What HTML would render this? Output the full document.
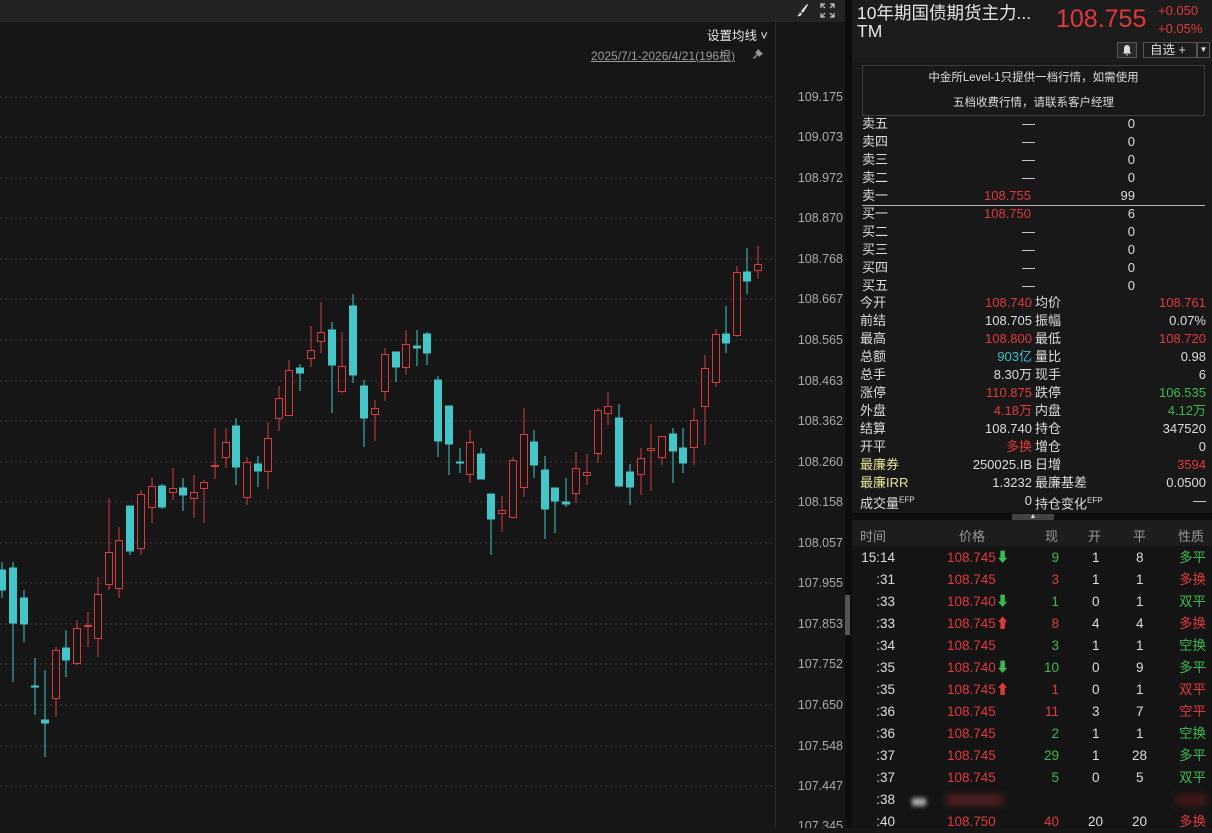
<!DOCTYPE html>
<html><head><meta charset="utf-8"><style>
*{margin:0;padding:0;box-sizing:border-box}
body{width:1212px;height:828px;background:#161616;overflow:hidden;position:relative;font-family:"Liberation Sans","Noto Sans CJK SC",sans-serif;color:#ddd}
.a{position:absolute;white-space:nowrap}
.r{color:#e0393c}.g{color:#3dba4e}.c{color:#3fc3c6}.y{color:#e8e39a}.w{color:#e6e6e6}
.ob{font-size:13px;line-height:18px}
.tr{font-size:13.5px}
</style></head><body>
<div class="a" style="left:0;top:0;width:845px;height:22px;background:#232323"></div>
<svg class="a" style="left:795px;top:3px" width="14" height="14" viewBox="0 0 14 14"><path d="M12 1 L6 8 L8 10 L13 2 Z" fill="#ddd"/><path d="M5 9 L7 11 Q5 14 2 13 Q4 12 5 9Z" fill="#ddd"/></svg>
<svg class="a" style="left:820px;top:3px" width="15" height="15" viewBox="0 0 15 15" fill="none" stroke="#ccc" stroke-width="1.2"><path d="M1 5V1H5M10 1H14V5M14 10V14H10M5 14H1V10M1 1L5 5M14 1L10 5M14 14L10 10M1 14L5 10"/></svg>
<div class="a w" style="left:707px;top:25px;font-size:12.5px">设置均线 ˅</div>
<div class="a" style="left:591px;top:47px;font-size:12px;color:#999;text-decoration:underline">2025/7/1-2026/4/21(196根)</div>
<svg class="a" style="left:752px;top:48px" width="12" height="12" viewBox="0 0 12 12"><path d="M6 1 L11 6 L9 7 L7 9 L6 7 L2 11 L1 10 L5 6 L3 5 L5 3 Z" fill="#999"/></svg>
<div class="a" style="left:775px;top:22px;width:1px;height:806px;background:#2c2c2c"></div>
<div class="a" style="left:845px;top:0;width:7px;height:828px;background:#0c0c0c"></div>
<div class="a" style="left:845px;top:595px;width:5px;height:40px;background:#555"></div>
<svg class="a" style="left:0;top:0" width="845" height="828">
<g stroke="#3a3a3a" stroke-dasharray="2 3" stroke-width="1">
<line x1="0" x2="775" y1="97" y2="97"/><line x1="0" x2="775" y1="137" y2="137"/><line x1="0" x2="775" y1="178" y2="178"/><line x1="0" x2="775" y1="218" y2="218"/><line x1="0" x2="775" y1="259" y2="259"/><line x1="0" x2="775" y1="299" y2="299"/><line x1="0" x2="775" y1="340" y2="340"/><line x1="0" x2="775" y1="381" y2="381"/><line x1="0" x2="775" y1="421" y2="421"/><line x1="0" x2="775" y1="462" y2="462"/><line x1="0" x2="775" y1="502" y2="502"/><line x1="0" x2="775" y1="543" y2="543"/><line x1="0" x2="775" y1="583" y2="583"/><line x1="0" x2="775" y1="624" y2="624"/><line x1="0" x2="775" y1="664" y2="664"/><line x1="0" x2="775" y1="705" y2="705"/><line x1="0" x2="775" y1="746" y2="746"/><line x1="0" x2="775" y1="786" y2="786"/>
</g>
<g fill="#aaa" font-size="12.5" text-anchor="end" font-family="Liberation Sans">
<text x="843" y="101">109.175</text><text x="843" y="141">109.073</text><text x="843" y="182">108.972</text><text x="843" y="222">108.870</text><text x="843" y="263">108.768</text><text x="843" y="303">108.667</text><text x="843" y="344">108.565</text><text x="843" y="385">108.463</text><text x="843" y="425">108.362</text><text x="843" y="466">108.260</text><text x="843" y="506">108.158</text><text x="843" y="547">108.057</text><text x="843" y="587">107.955</text><text x="843" y="628">107.853</text><text x="843" y="668">107.752</text><text x="843" y="709">107.650</text><text x="843" y="750">107.548</text><text x="843" y="790">107.447</text><text x="843" y="830">107.345</text>
</g>
<g stroke="#44c5c8" fill="#44c5c8" stroke-width="1">
<line x1="2" x2="2" y1="562" y2="598"/><rect x="-1.5" y="570" width="7" height="20"/>
<line x1="13" x2="13" y1="562" y2="682"/><rect x="9.5" y="568" width="7" height="55"/>
<line x1="24" x2="24" y1="590" y2="642"/><rect x="20.5" y="598" width="7" height="26"/>
<line x1="35" x2="35" y1="658" y2="715"/><rect x="31.5" y="686" width="7" height="1"/>
<line x1="45" x2="45" y1="670" y2="757"/><rect x="41.5" y="720" width="7" height="3"/>
<line x1="66" x2="66" y1="630" y2="677"/><rect x="62.5" y="648" width="7" height="12"/>
<line x1="130" x2="130" y1="506" y2="555"/><rect x="126.5" y="506" width="7" height="45"/>
<line x1="162" x2="162" y1="484" y2="509"/><rect x="158.5" y="486" width="7" height="21"/>
<line x1="183" x2="183" y1="478" y2="511"/><rect x="179.5" y="488" width="7" height="7"/>
<line x1="236" x2="236" y1="418" y2="485"/><rect x="232.5" y="426" width="7" height="41"/>
<line x1="258" x2="258" y1="456" y2="487"/><rect x="254.5" y="464" width="7" height="7"/>
<line x1="300" x2="300" y1="364" y2="391"/><rect x="296.5" y="368" width="7" height="5"/>
<line x1="332" x2="332" y1="322" y2="413"/><rect x="328.5" y="330" width="7" height="35"/>
<line x1="353" x2="353" y1="294" y2="383"/><rect x="349.5" y="306" width="7" height="69"/>
<line x1="364" x2="364" y1="380" y2="447"/><rect x="360.5" y="386" width="7" height="32"/>
<line x1="396" x2="396" y1="352" y2="382"/><rect x="392.5" y="352" width="7" height="15"/>
<line x1="417" x2="417" y1="330" y2="366"/><rect x="413.5" y="346" width="7" height="2"/>
<line x1="427" x2="427" y1="332" y2="365"/><rect x="423.5" y="334" width="7" height="19"/>
<line x1="438" x2="438" y1="376" y2="457"/><rect x="434.5" y="380" width="7" height="61"/>
<line x1="449" x2="449" y1="406" y2="475"/><rect x="445.5" y="406" width="7" height="38"/>
<line x1="460" x2="460" y1="448" y2="473"/><rect x="456.5" y="462" width="7" height="1"/>
<line x1="481" x2="481" y1="448" y2="479"/><rect x="477.5" y="454" width="7" height="25"/>
<line x1="491" x2="491" y1="494" y2="555"/><rect x="487.5" y="494" width="7" height="25"/>
<line x1="534" x2="534" y1="430" y2="478"/><rect x="530.5" y="442" width="7" height="23"/>
<line x1="545" x2="545" y1="456" y2="539"/><rect x="541.5" y="470" width="7" height="39"/>
<line x1="555" x2="555" y1="488" y2="533"/><rect x="551.5" y="488" width="7" height="13"/>
<line x1="566" x2="566" y1="478" y2="507"/><rect x="562.5" y="502" width="7" height="2"/>
<line x1="619" x2="619" y1="404" y2="487"/><rect x="615.5" y="418" width="7" height="68"/>
<line x1="630" x2="630" y1="464" y2="505"/><rect x="626.5" y="472" width="7" height="15"/>
<line x1="673" x2="673" y1="428" y2="483"/><rect x="669.5" y="434" width="7" height="17"/>
<line x1="683" x2="683" y1="428" y2="473"/><rect x="679.5" y="448" width="7" height="15"/>
<line x1="726" x2="726" y1="306" y2="353"/><rect x="722.5" y="334" width="7" height="9"/>
<line x1="747" x2="747" y1="248" y2="294"/><rect x="743.5" y="272" width="7" height="9"/>
</g>
<g stroke="#d83b3e" fill="#161616" stroke-width="1">
<line x1="56" x2="56" y1="647" y2="717"/><rect x="52.5" y="650.5" width="7" height="48"/>
<line x1="77" x2="77" y1="620" y2="665"/><rect x="73.5" y="628.5" width="7" height="35"/>
<line x1="88" x2="88" y1="612" y2="647"/><rect x="84.5" y="625.5" width="7" height="1"/>
<line x1="98" x2="98" y1="577" y2="657"/><rect x="94.5" y="594.5" width="7" height="44"/>
<line x1="109" x2="109" y1="498" y2="590"/><rect x="105.5" y="552.5" width="7" height="32"/>
<line x1="119" x2="119" y1="527" y2="598"/><rect x="115.5" y="540.5" width="7" height="48"/>
<line x1="141" x2="141" y1="490" y2="555"/><rect x="137.5" y="494.5" width="7" height="54"/>
<line x1="152" x2="152" y1="478" y2="523"/><rect x="148.5" y="486.5" width="7" height="21"/>
<line x1="173" x2="173" y1="468" y2="500"/><rect x="169.5" y="488.5" width="7" height="4"/>
<line x1="194" x2="194" y1="475" y2="518"/><rect x="190.5" y="492.5" width="7" height="6"/>
<line x1="204" x2="204" y1="480" y2="523"/><rect x="200.5" y="482.5" width="7" height="6"/>
<line x1="215" x2="215" y1="428" y2="479"/><rect x="211.5" y="465.5" width="7" height="1"/>
<line x1="226" x2="226" y1="428" y2="468"/><rect x="222.5" y="442.5" width="7" height="15"/>
<line x1="247" x2="247" y1="457" y2="505"/><rect x="243.5" y="462.5" width="7" height="35"/>
<line x1="268" x2="268" y1="422" y2="489"/><rect x="264.5" y="438.5" width="7" height="33"/>
<line x1="279" x2="279" y1="386" y2="431"/><rect x="275.5" y="398.5" width="7" height="20"/>
<line x1="289" x2="289" y1="360" y2="415"/><rect x="285.5" y="370.5" width="7" height="45"/>
<line x1="311" x2="311" y1="326" y2="367"/><rect x="307.5" y="350.5" width="7" height="8"/>
<line x1="321" x2="321" y1="302" y2="353"/><rect x="317.5" y="332.5" width="7" height="9"/>
<line x1="342" x2="342" y1="332" y2="393"/><rect x="338.5" y="366.5" width="7" height="25"/>
<line x1="375" x2="375" y1="400" y2="441"/><rect x="371.5" y="408.5" width="7" height="6"/>
<line x1="385" x2="385" y1="348" y2="401"/><rect x="381.5" y="354.5" width="7" height="37"/>
<line x1="406" x2="406" y1="330" y2="375"/><rect x="402.5" y="344.5" width="7" height="23"/>
<line x1="470" x2="470" y1="430" y2="483"/><rect x="466.5" y="442.5" width="7" height="32"/>
<line x1="502" x2="502" y1="496" y2="532"/><rect x="498.5" y="510.5" width="7" height="3"/>
<line x1="513" x2="513" y1="457" y2="518"/><rect x="509.5" y="460.5" width="7" height="57"/>
<line x1="524" x2="524" y1="408" y2="497"/><rect x="520.5" y="434.5" width="7" height="53"/>
<line x1="576" x2="576" y1="452" y2="503"/><rect x="572.5" y="468.5" width="7" height="25"/>
<line x1="587" x2="587" y1="454" y2="485"/><rect x="583.5" y="472.5" width="7" height="3"/>
<line x1="598" x2="598" y1="408" y2="463"/><rect x="594.5" y="410.5" width="7" height="43"/>
<line x1="608" x2="608" y1="392" y2="425"/><rect x="604.5" y="406.5" width="7" height="7"/>
<line x1="641" x2="641" y1="448" y2="495"/><rect x="637.5" y="458.5" width="7" height="16"/>
<line x1="651" x2="651" y1="424" y2="491"/><rect x="647.5" y="448.5" width="7" height="2"/>
<line x1="662" x2="662" y1="436" y2="465"/><rect x="658.5" y="436.5" width="7" height="21"/>
<line x1="694" x2="694" y1="408" y2="465"/><rect x="690.5" y="420.5" width="7" height="27"/>
<line x1="705" x2="705" y1="355" y2="445"/><rect x="701.5" y="368.5" width="7" height="38"/>
<line x1="716" x2="716" y1="329" y2="387"/><rect x="712.5" y="334.5" width="7" height="48"/>
<line x1="737" x2="737" y1="266" y2="337"/><rect x="733.5" y="272.5" width="7" height="63"/>
<line x1="758" x2="758" y1="246" y2="279"/><rect x="754.5" y="264.5" width="7" height="6"/>
</g>
</svg>

<div class="a" style="left:852px;top:0;width:360px;height:62px;background:#1c1c1c"></div>
<div class="a" style="left:852px;top:62px;width:360px;height:453px;background:#181818"></div>
<div class="a w" style="left:857px;top:0px;font-size:17.5px">10年期国债期货主力...</div>
<div class="a w" style="left:857px;top:21px;font-size:17.5px">TM</div>
<div class="a r" style="left:1056px;top:5px;font-size:25px">108.755</div>
<div class="a r" style="left:1158px;top:3px;font-size:13px">+0.050</div>
<div class="a r" style="left:1158px;top:21px;font-size:13px">+0.05%</div>
<div class="a" style="left:1117px;top:42px;width:20px;height:16px;background:#2a2a2a;border:1px solid #555"></div>
<svg class="a" style="left:1121px;top:44px" width="12" height="12" viewBox="0 0 12 12"><path d="M6 1 Q9 1 9 5 V8 L10.5 9.5 H1.5 L3 8 V5 Q3 1 6 1Z M5 10.2 H7 Q6.8 11.5 6 11.5 Q5.2 11.5 5 10.2Z" fill="#ddd"/></svg>
<div class="a" style="left:1143px;top:42px;width:54px;height:16px;border:1px solid #555;font-size:12.5px;line-height:14px;padding-left:6px;color:#ddd">自选 +</div>
<div class="a" style="left:1197px;top:42px;width:13px;height:16px;border:1px solid #555;font-size:8px;line-height:14px;text-align:center;color:#ddd">▼</div>
<div class="a" style="left:862px;top:65px;width:343px;height:51px;border:1px solid #3d3d3d;font-size:11.5px;line-height:25px;text-align:center;color:#ddd">中金所Level-1只提供一档行情，如需使用<br>五档收费行情，请联系客户经理</div>

<div class="a ob" style="left:862px;top:115px;width:343px">
<div style="position:relative;height:18px"><span>卖五</span><span class="a" style="left:160px">—</span><span class="a" style="right:70px">0</span></div>
<div style="position:relative;height:18px"><span>卖四</span><span class="a" style="left:160px">—</span><span class="a" style="right:70px">0</span></div>
<div style="position:relative;height:18px"><span>卖三</span><span class="a" style="left:160px">—</span><span class="a" style="right:70px">0</span></div>
<div style="position:relative;height:18px"><span>卖二</span><span class="a" style="left:160px">—</span><span class="a" style="right:70px">0</span></div>
<div style="position:relative;height:18px"><span>卖一</span><span class="a r" style="right:174px">108.755</span><span class="a" style="right:70px">99</span></div>
<div style="position:relative;height:18px"><span>买一</span><span class="a r" style="right:174px">108.750</span><span class="a" style="right:70px">6</span></div>
<div style="position:relative;height:18px"><span>买二</span><span class="a" style="left:160px">—</span><span class="a" style="right:70px">0</span></div>
<div style="position:relative;height:18px"><span>买三</span><span class="a" style="left:160px">—</span><span class="a" style="right:70px">0</span></div>
<div style="position:relative;height:18px"><span>买四</span><span class="a" style="left:160px">—</span><span class="a" style="right:70px">0</span></div>
<div style="position:relative;height:18px"><span>买五</span><span class="a" style="left:160px">—</span><span class="a" style="right:70px">0</span></div>
</div>
<div class="a" style="left:862px;top:205px;width:343px;height:1px;background:#bbb"></div>

<div class="a ob" style="left:860px;top:294px;width:346px">
<div style="position:relative;height:18px"><span>今开</span><span class="a r" style="right:174px">108.740</span><span class="a" style="left:175px">均价</span><span class="a r" style="right:0">108.761</span></div>
<div style="position:relative;height:18px"><span>前结</span><span class="a" style="right:174px">108.705</span><span class="a" style="left:175px">振幅</span><span class="a" style="right:0">0.07%</span></div>
<div style="position:relative;height:18px"><span>最高</span><span class="a r" style="right:174px">108.800</span><span class="a" style="left:175px">最低</span><span class="a r" style="right:0">108.720</span></div>
<div style="position:relative;height:18px"><span>总额</span><span class="a c" style="right:174px">903亿</span><span class="a" style="left:175px">量比</span><span class="a" style="right:0">0.98</span></div>
<div style="position:relative;height:18px"><span>总手</span><span class="a" style="right:174px">8.30万</span><span class="a" style="left:175px">现手</span><span class="a" style="right:0">6</span></div>
<div style="position:relative;height:18px"><span>涨停</span><span class="a r" style="right:174px">110.875</span><span class="a" style="left:175px">跌停</span><span class="a g" style="right:0">106.535</span></div>
<div style="position:relative;height:18px"><span>外盘</span><span class="a r" style="right:174px">4.18万</span><span class="a" style="left:175px">内盘</span><span class="a g" style="right:0">4.12万</span></div>
<div style="position:relative;height:18px"><span>结算</span><span class="a" style="right:174px">108.740</span><span class="a" style="left:175px">持仓</span><span class="a" style="right:0">347520</span></div>
<div style="position:relative;height:18px"><span>开平</span><span class="a r" style="right:174px">多换</span><span class="a" style="left:175px">增仓</span><span class="a" style="right:0">0</span></div>
<div style="position:relative;height:18px"><span class="y">最廉券</span><span class="a" style="right:174px">250025.IB</span><span class="a" style="left:175px">日增</span><span class="a r" style="right:0">3594</span></div>
<div style="position:relative;height:18px"><span class="y">最廉IRR</span><span class="a" style="right:174px">1.3232</span><span class="a" style="left:175px">最廉基差</span><span class="a" style="right:0">0.0500</span></div>
<div style="position:relative;height:18px"><span>成交量<sup style="font-size:8px">EFP</sup></span><span class="a" style="right:174px">0</span><span class="a" style="left:175px">持仓变化<sup style="font-size:8px">EFP</sup></span><span class="a" style="right:0">—</span></div>
</div>
<div class="a" style="left:852px;top:513px;width:360px;height:7px;background:#0e0e0e"></div>
<div class="a" style="left:1012px;top:514px;width:42px;height:6px;background:#444;font-size:7px;line-height:6px;text-align:center;color:#ddd">▲</div>
<div class="a" style="left:852px;top:520px;width:360px;height:26px;background:#1d1d1d"></div>
<div class="a" style="left:852px;top:546px;width:360px;height:282px;background:#141414"></div>
<div class="a" style="left:860px;top:526px;font-size:13px;color:#999">时间</div>
<div class="a" style="left:959px;top:526px;font-size:13px;color:#999">价格</div>
<div class="a" style="left:1045px;top:526px;font-size:13px;color:#999">现</div>
<div class="a" style="left:1088px;top:526px;font-size:13px;color:#999">开</div>
<div class="a" style="left:1133px;top:526px;font-size:13px;color:#999">平</div>
<div class="a" style="left:1178px;top:526px;font-size:13px;color:#999">性质</div>

<div class="a tr" style="left:852px;top:547px;width:354px;line-height:22px">
<div style="position:relative;height:22px"><span class="a" style="right:311px">15:14</span><span class="a r" style="left:95px">108.745<b class="g">⬇</b></span><span class="a g" style="right:147px">9</span><span class="a" style="left:240px">1</span><span class="a" style="left:284px">8</span><span class="a g" style="right:0">多平</span></div>
<div style="position:relative;height:22px"><span class="a" style="right:311px">:31</span><span class="a r" style="left:95px">108.745</span><span class="a r" style="right:147px">3</span><span class="a" style="left:240px">1</span><span class="a" style="left:284px">1</span><span class="a r" style="right:0">多换</span></div>
<div style="position:relative;height:22px"><span class="a" style="right:311px">:33</span><span class="a r" style="left:95px">108.740<b class="g">⬇</b></span><span class="a g" style="right:147px">1</span><span class="a" style="left:240px">0</span><span class="a" style="left:284px">1</span><span class="a g" style="right:0">双平</span></div>
<div style="position:relative;height:22px"><span class="a" style="right:311px">:33</span><span class="a r" style="left:95px">108.745<b>⬆</b></span><span class="a r" style="right:147px">8</span><span class="a" style="left:240px">4</span><span class="a" style="left:284px">4</span><span class="a r" style="right:0">多换</span></div>
<div style="position:relative;height:22px"><span class="a" style="right:311px">:34</span><span class="a r" style="left:95px">108.745</span><span class="a g" style="right:147px">3</span><span class="a" style="left:240px">1</span><span class="a" style="left:284px">1</span><span class="a g" style="right:0">空换</span></div>
<div style="position:relative;height:22px"><span class="a" style="right:311px">:35</span><span class="a r" style="left:95px">108.740<b class="g">⬇</b></span><span class="a g" style="right:147px">10</span><span class="a" style="left:240px">0</span><span class="a" style="left:284px">9</span><span class="a g" style="right:0">多平</span></div>
<div style="position:relative;height:22px"><span class="a" style="right:311px">:35</span><span class="a r" style="left:95px">108.745<b>⬆</b></span><span class="a r" style="right:147px">1</span><span class="a" style="left:240px">0</span><span class="a" style="left:284px">1</span><span class="a r" style="right:0">双平</span></div>
<div style="position:relative;height:22px"><span class="a" style="right:311px">:36</span><span class="a r" style="left:95px">108.745</span><span class="a r" style="right:147px">11</span><span class="a" style="left:240px">3</span><span class="a" style="left:284px">7</span><span class="a r" style="right:0">空平</span></div>
<div style="position:relative;height:22px"><span class="a" style="right:311px">:36</span><span class="a r" style="left:95px">108.745</span><span class="a g" style="right:147px">2</span><span class="a" style="left:240px">1</span><span class="a" style="left:284px">1</span><span class="a g" style="right:0">空换</span></div>
<div style="position:relative;height:22px"><span class="a" style="right:311px">:37</span><span class="a r" style="left:95px">108.745</span><span class="a g" style="right:147px">29</span><span class="a" style="left:240px">1</span><span class="a" style="left:280px">28</span><span class="a g" style="right:0">多平</span></div>
<div style="position:relative;height:22px"><span class="a" style="right:311px">:37</span><span class="a r" style="left:95px">108.745</span><span class="a g" style="right:147px">5</span><span class="a" style="left:240px">0</span><span class="a" style="left:284px">5</span><span class="a g" style="right:0">双平</span></div>
<div style="position:relative;height:22px"><span class="a" style="right:311px">:38</span><span class="a" style="left:60px;top:9px;width:14px;height:8px;background:#aaa;filter:blur(2px)"></span><span class="a" style="left:95px;top:6px;width:55px;height:10px;background:#5a1e1e;filter:blur(4px)"></span><span class="a" style="right:0;top:6px;width:30px;height:10px;background:#4a1a1a;filter:blur(4px)"></span></div>
<div style="position:relative;height:22px"><span class="a" style="right:311px">:40</span><span class="a r" style="left:95px">108.750</span><span class="a r" style="right:147px">40</span><span class="a" style="left:236px">20</span><span class="a" style="left:280px">20</span><span class="a r" style="right:0">多换</span></div>
</div>
</body></html>
